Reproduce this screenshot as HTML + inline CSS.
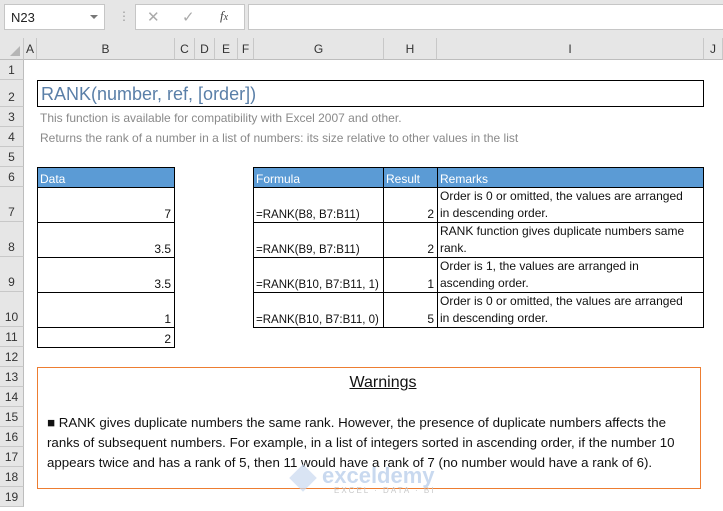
<!DOCTYPE html><html><head><style>
*{margin:0;padding:0;box-sizing:border-box}
body{width:723px;height:511px;overflow:hidden;background:#fff;font-family:"Liberation Sans",sans-serif;position:relative;font-size:12px}
.a{position:absolute}
.rh{position:absolute;left:0;width:24px;background:#e6e6e6;border-bottom:1px solid #c8c8c8;border-right:1px solid #bdbdbd;color:#333;font-size:12px;display:flex;align-items:flex-end;justify-content:center;padding-bottom:2px}
.ch{position:absolute;top:38px;height:22px;background:#e6e6e6;border-right:1px solid #c8c8c8;border-bottom:1px solid #bdbdbd;color:#333;font-size:12px;display:flex;align-items:center;justify-content:center}
.c{position:absolute;border:1px solid #000;font-size:12px;color:#111;overflow:hidden;white-space:nowrap}
.hd{background:#5b9bd5;color:#fff;padding:4px 2px 0}
.r{text-align:right;padding-right:3px;padding-bottom:1px;display:flex;align-items:flex-end;justify-content:flex-end}
.l{display:flex;align-items:flex-end;padding-left:2px;padding-bottom:1px;font-size:11.5px}
.m{padding-left:2px;padding-right:14px;line-height:17px;white-space:normal}
</style></head><body>
<div class="a" style="left:0;top:0;width:723px;height:38px;background:#e6e6e6"></div>
<div class="a" style="left:4px;top:4px;width:101px;height:26px;background:#fff;border:1px solid #c6c6c6;font-size:13px;padding:5px 0 0 6px;color:#222">N23<span style="position:absolute;right:6px;top:10px;border-left:4px solid transparent;border-right:4px solid transparent;border-top:4px solid #777"></span></div>
<div class="a" style="left:118px;top:9px;color:#999;font-size:12px">⋮</div>
<div class="a" style="left:135px;top:4px;width:110px;height:26px;background:#fff;border:1px solid #c6c6c6"></div>
<div class="a" style="left:147px;top:8px;color:#aaa;font-size:15px">✕</div>
<div class="a" style="left:182px;top:8px;color:#aaa;font-size:15px">✓</div>
<div class="a" style="left:220px;top:8px;color:#444;font-size:13px;font-style:italic;font-family:'Liberation Serif',serif">f<span style="font-size:10px">x</span></div>
<div class="a" style="left:248px;top:4px;width:480px;height:26px;background:#fff;border:1px solid #c6c6c6"></div>
<div class="ch" style="left:0;width:24px"><span style="position:absolute;right:3px;bottom:3px;border-left:10px solid transparent;border-bottom:10px solid #b5b5b5"></span></div>
<div class="ch" style="left:24px;width:13px">A</div>
<div class="ch" style="left:37px;width:138px">B</div>
<div class="ch" style="left:175px;width:20px">C</div>
<div class="ch" style="left:195px;width:20px">D</div>
<div class="ch" style="left:215px;width:23px">E</div>
<div class="ch" style="left:238px;width:16px">F</div>
<div class="ch" style="left:254px;width:130px">G</div>
<div class="ch" style="left:384px;width:53px">H</div>
<div class="ch" style="left:437px;width:267px">I</div>
<div class="ch" style="left:704px;width:19px">J</div>
<div class="rh" style="top:60px;height:20px">1</div>
<div class="rh" style="top:80px;height:27px">2</div>
<div class="rh" style="top:107px;height:20px">3</div>
<div class="rh" style="top:127px;height:20px">4</div>
<div class="rh" style="top:147px;height:20px">5</div>
<div class="rh" style="top:167px;height:20px">6</div>
<div class="rh" style="top:187px;height:35px">7</div>
<div class="rh" style="top:222px;height:35px">8</div>
<div class="rh" style="top:257px;height:35px">9</div>
<div class="rh" style="top:292px;height:35px">10</div>
<div class="rh" style="top:327px;height:20px">11</div>
<div class="rh" style="top:347px;height:20px">12</div>
<div class="rh" style="top:367px;height:20px">13</div>
<div class="rh" style="top:387px;height:20px">14</div>
<div class="rh" style="top:407px;height:20px">15</div>
<div class="rh" style="top:427px;height:20px">16</div>
<div class="rh" style="top:447px;height:20px">17</div>
<div class="rh" style="top:467px;height:20px">18</div>
<div class="rh" style="top:487px;height:20px">19</div>
<div class="a" style="left:37px;top:80px;width:667px;height:27px;border:1px solid #000;color:#5a7fa8;font-size:18px;padding:3px 0 0 3px">RANK(number, ref, [order])</div>
<div class="a" style="left:40px;top:111px;color:#8a8a8a;font-size:12px">This function is available for compatibility with Excel 2007 and other.</div>
<div class="a" style="left:40px;top:131px;color:#8a8a8a;font-size:12px">Returns the rank of a number in a list of numbers: its size relative to other values in the list</div>
<div class="c hd" style="left:37px;top:167px;width:138px;height:21px">Data</div>
<div class="c r" style="left:37px;top:187px;width:138px;height:36px">7</div>
<div class="c r" style="left:37px;top:222px;width:138px;height:36px">3.5</div>
<div class="c r" style="left:37px;top:257px;width:138px;height:36px">3.5</div>
<div class="c r" style="left:37px;top:292px;width:138px;height:36px">1</div>
<div class="c r" style="left:37px;top:327px;width:138px;height:21px">2</div>
<div class="c hd" style="left:253px;top:167px;width:131px;height:21px">Formula</div>
<div class="c hd" style="left:383px;top:167px;width:55px;height:21px">Result</div>
<div class="c hd" style="left:437px;top:167px;width:267px;height:21px">Remarks</div>
<div class="c l" style="left:253px;top:187px;width:131px;height:36px">=RANK(B8, B7:B11)</div>
<div class="c r" style="left:383px;top:187px;width:55px;height:36px">2</div>
<div class="c m" style="left:437px;top:187px;width:267px;height:36px">Order is 0 or omitted, the values are arranged in descending order.</div>
<div class="c l" style="left:253px;top:222px;width:131px;height:36px">=RANK(B9, B7:B11)</div>
<div class="c r" style="left:383px;top:222px;width:55px;height:36px">2</div>
<div class="c m" style="left:437px;top:222px;width:267px;height:36px">RANK function gives duplicate numbers same<br>rank.</div>
<div class="c l" style="left:253px;top:257px;width:131px;height:36px">=RANK(B10, B7:B11, 1)</div>
<div class="c r" style="left:383px;top:257px;width:55px;height:36px">1</div>
<div class="c m" style="left:437px;top:257px;width:267px;height:36px">Order is 1, the values are arranged in<br>ascending order.</div>
<div class="c l" style="left:253px;top:292px;width:131px;height:36px">=RANK(B10, B7:B11, 0)</div>
<div class="c r" style="left:383px;top:292px;width:55px;height:36px">5</div>
<div class="c m" style="left:437px;top:292px;width:267px;height:36px">Order is 0 or omitted, the values are arranged in descending order.</div>
<div class="a" style="left:37px;top:367px;width:664px;height:122px;border:1px solid #ed7d31"></div>
<div class="a" style="left:37px;top:374px;width:692px;text-align:center;font-size:16px;color:#111;text-decoration:underline">Warnings</div>
<div class="a" style="left:47px;top:413px;width:650px;font-size:13.3px;line-height:20px;color:#111">■ RANK gives duplicate numbers the same rank. However, the presence of duplicate numbers affects the ranks of subsequent numbers. For example, in a list of integers sorted in ascending order, if the number 10 appears twice and has a rank of 5, then 11 would have a rank of 7 (no number would have a rank of 6).</div>
<div class="a" style="left:290px;top:465px;width:26px;height:26px;background:#c9d9f0;opacity:.7;transform:rotate(45deg) scale(.75)"></div>
<div class="a" style="left:322px;top:463px;font-size:22px;font-weight:bold;color:#bcd0ec;opacity:.8">exceldemy</div>
<div class="a" style="left:334px;top:486px;font-size:8px;color:#c8c8c8;letter-spacing:2px">EXCEL · DATA · BI</div>
</body></html>
